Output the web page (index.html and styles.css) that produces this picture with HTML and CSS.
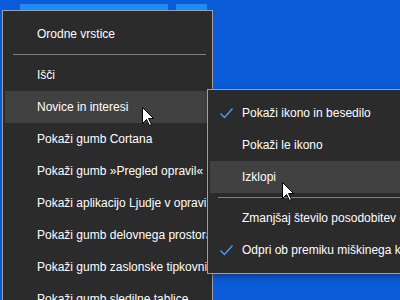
FILE: index.html
```html
<!DOCTYPE html>
<html lang="sl">
<head>
  <meta charset="UTF-8" />
  <title>Opravilna vrstica</title>
  <link rel="stylesheet" href="styles.css">
</head>
<body>
  <div class="desktop">
    <div class="tile tile-wide"></div>
    <div class="tile tile-small"></div>

    <div class="menu main-menu">
      <div class="item">Orodne vrstice</div>
      <div class="sep"></div>
      <div class="item">Išči</div>
      <div class="item active">Novice in interesi</div>
      <div class="item">Pokaži gumb Cortana</div>
      <div class="item">Pokaži gumb »Pregled opravil«</div>
      <div class="item">Pokaži aplikacijo Ljudje v opravilni vrstici</div>
      <div class="item">Pokaži gumb delovnega prostora Windows Ink</div>
      <div class="item">Pokaži gumb zaslonske tipkovnice</div>
      <div class="item">Pokaži gumb sledilne tablice</div>
    </div>

    <div class="menu sub-menu">
      <div class="item">
        <svg class="check" width="13" height="11" viewBox="0 0 13 11"><polyline points="0.5,5.5 4.5,9.5 12.5,0.5" /></svg>
        Pokaži ikono in besedilo
      </div>
      <div class="item">Pokaži le ikono</div>
      <div class="item active">Izklopi</div>
      <div class="sep"></div>
      <div class="item">Zmanjšaj število posodobitev opravilne vrstice</div>
      <div class="item">
        <svg class="check" width="13" height="11" viewBox="0 0 13 11"><polyline points="0.5,5.5 4.5,9.5 12.5,0.5" /></svg>
        Odpri ob premiku miškinega kazalca
      </div>
    </div>

    <svg class="cursor cursor-one" width="13" height="20" viewBox="0 0 13 20"><path d="M0.5,0.5 L0.5,16.5 L4.5,12.5 L7.5,18.5 L9.5,17.5 L6.5,11.5 L11.5,11.5 Z" /></svg>
    <svg class="cursor cursor-two" width="13" height="20" viewBox="0 0 13 20"><path d="M0.5,0.5 L0.5,16.5 L4.5,12.5 L7.5,18.5 L9.5,17.5 L6.5,11.5 L11.5,11.5 Z" /></svg>
  </div>
</body>
</html>
```

FILE: styles.css
```css
body {
  margin: 0;
  padding: 0;
  font-family: "Liberation Sans", Arial, sans-serif;
  font-size: 12px;
  color: white;
}
.desktop {
  position: relative;
  width: 400px;
  height: 300px;
  overflow: hidden;
  background: #0b5bd8;
}
.tile {
  position: absolute;
  top: 4px;
  height: 8px;
  background: #1f8cf2;
}
.tile-wide {
  left: 20px;
  width: 148px;
}
.tile-small {
  left: 176px;
  width: 31px;
}
.menu {
  position: absolute;
  background: #2b2b2b;
  border: 1px solid #a0a0a0;
  padding: 7px 0;
  display: flex;
  flex-direction: column;
}
.main-menu {
  left: 2px;
  top: 10px;
  width: 209px;
  height: 320px;
}
.sub-menu {
  left: 207px;
  top: 89px;
  width: 260px;
  box-shadow: 2px 2px 6px rgba(0, 0, 0, 0.4);
}
.item {
  position: relative;
  height: 32px;
  line-height: 32px;
  margin: 0 2px;
  padding-left: 32px;
  white-space: nowrap;
  overflow: hidden;
}
.item.active {
  background: #414141;
}
.sep {
  height: 1px;
  margin: 4px 6px 4px 10px;
  background: #808080;
}
.check {
  position: absolute;
  left: 10px;
  top: 11px;
}
.check polyline {
  fill: none;
  stroke: #4c9ef5;
  stroke-width: 1.3;
}
.cursor {
  position: absolute;
}
.cursor path {
  fill: white;
  stroke: black;
  stroke-width: 1;
  stroke-linejoin: miter;
}
.cursor-one {
  left: 142px;
  top: 107px;
}
.cursor-two {
  left: 282px;
  top: 182px;
}
```
